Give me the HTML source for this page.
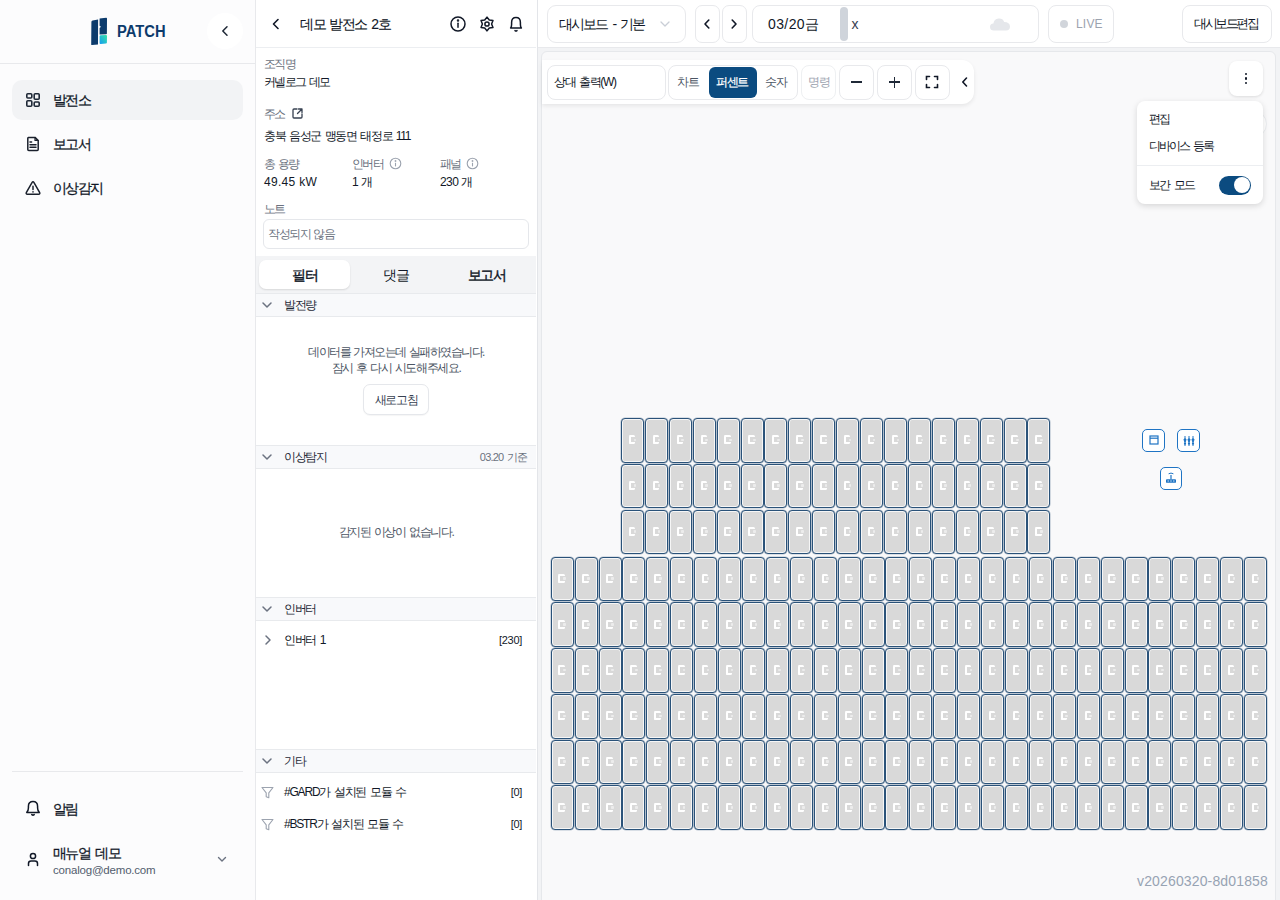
<!DOCTYPE html>
<html><head><meta charset="utf-8">
<style>
*{box-sizing:border-box;margin:0;padding:0}
html,body{width:1280px;height:900px;overflow:hidden;background:#fff;font-family:"Liberation Sans",sans-serif;color:#111827}
.a{position:absolute}
.t{position:absolute;white-space:nowrap;line-height:16px}
svg{display:block}
#side{left:0;top:0;width:256px;height:900px;background:#fcfcfd;border-right:1px solid #e8e9ec}
#panel{left:256px;top:0;width:282px;height:900px;background:#fff;border-right:1.5px solid #e3e5e9}
#main{left:538px;top:0;width:742px;height:900px;background:#fff}
.c{position:absolute;width:23px;height:44.6px;border:1.5px solid #2a5279;border-radius:4px;background:#d9d9d9;box-shadow:inset 0 0 0 1px #f6f6f6,0 0 0 .6px rgba(60,95,130,.35)}
.c::after{content:"";box-sizing:border-box;position:absolute;left:6.8px;top:16.2px;width:6.5px;height:9.2px;border:2px solid #fff;border-right-width:0;border-radius:1.5px}
.c::before{content:"";position:absolute;left:11.6px;top:19.6px;width:2.6px;height:2.6px;background:#ececec;border-radius:1px}
</style></head><body>

<!-- SIDEBAR -->
<div id="side" class="a">
  <!-- logo -->
  <svg class="a" style="left:90px;top:16px" width="20" height="31" viewBox="0 0 20 31">
    <defs><linearGradient id="lg" x1="1" y1="0" x2="0" y2="1"><stop offset="0" stop-color="#34e3a6"/><stop offset="1" stop-color="#159cf2"/></linearGradient></defs>
    <path d="M2.6 4.6 Q1.4 4.8 1.4 6 L1.2 28.4 Q1.2 29.2 2 29.1 L8 28.5 L8.1 3.4 Z" fill="#0c3b6c"/>
    <path d="M9.6 2.4 L16.2 1.8 Q17 1.8 17 2.6 L16.9 17.4 Q16.9 18.1 16.2 18.2 L9.6 18.5 L9.6 12 L11 10.8 L9.6 9.8 Z" fill="#0c3b6c"/>
    <path d="M10.6 19.3 L16 18.9 Q17 18.9 17 19.9 L16.9 26.6 Q16.9 27.4 16 27.5 L10.6 27.9 Q9.6 28 9.6 27 L9.6 20.3 Q9.6 19.4 10.6 19.3 Z" fill="url(#lg)"/>
  </svg>
  <div class="t" style="left:116.8px;top:24.3px;font-size:16px;line-height:16px;font-weight:bold;color:#0c3b6c;transform:scaleX(.92);transform-origin:left">PATCH</div>
  <!-- collapse -->
  <div class="a" style="left:207px;top:13px;width:36px;height:36px;border-radius:50%;background:#fff"></div>
  <svg class="a" style="left:219px;top:25px" width="12" height="12" viewBox="0 0 12 12"><path d="M8 1.8 L3.8 6 L8 10.2" fill="none" stroke="#1f2937" stroke-width="1.5" stroke-linecap="round" stroke-linejoin="round"/></svg>
  <div class="a" style="left:0;top:63px;width:255px;height:1px;background:#e8e9ec"></div>

  <!-- nav -->
  <div class="a" style="left:12px;top:80px;width:231px;height:40px;border-radius:10px;background:#f2f3f5"></div>
  <svg class="a" style="left:25px;top:92px" width="16" height="16" viewBox="0 0 16 16" fill="none" stroke="#1f2937" stroke-width="1.6">
    <rect x="1.8" y="1.8" width="5" height="4.2" rx="1"/><rect x="1.8" y="8.8" width="5" height="5.4" rx="1"/>
    <rect x="9.2" y="1.8" width="5" height="5.4" rx="1"/><rect x="9.2" y="10" width="5" height="4.2" rx="1"/>
  </svg>
  <div class="t" style="left:53px;top:92px;font-size:14px;-webkit-text-stroke:.25px #111827;letter-spacing:-1.6px">발전소</div>

  <svg class="a" style="left:25px;top:136px" width="16" height="16" viewBox="0 0 16 16" fill="none" stroke="#1a202c" stroke-width="1.5" stroke-linejoin="round" stroke-linecap="round">
    <path d="M3.4 1.4 H10 L13.2 4.6 V13.6 Q13.2 14.6 12.2 14.6 H3.8 Q2.8 14.6 2.8 13.6 V2.2 Q2.8 1.4 3.4 1.4 Z"/><path d="M10 1.6 V4.4 H13" stroke-width="1.2"/><path d="M5 6 H6.6 M5 8.8 H11 M5 11.3 H11"/>
  </svg>
  <div class="t" style="left:53px;top:136px;font-size:14px;-webkit-text-stroke:.25px #111827;letter-spacing:-1.6px">보고서</div>

  <svg class="a" style="left:25px;top:180px" width="16" height="16" viewBox="0 0 16 16" fill="none" stroke="#1a202c" stroke-width="1.5" stroke-linejoin="round" stroke-linecap="round">
    <path d="M7 2.6 Q8 1 9 2.6 L14.6 12.4 Q15.4 14.2 13.6 14.2 H2.4 Q0.6 14.2 1.4 12.4 Z"/><path d="M8 6.2 V9.4 M8 11.8 V11.9"/>
  </svg>
  <div class="t" style="left:53px;top:180px;font-size:14px;-webkit-text-stroke:.25px #111827;letter-spacing:-1.6px">이상감지</div>

  <div class="a" style="left:12px;top:771px;width:231px;height:1px;background:#e8e9ec"></div>
  <svg class="a" style="left:25px;top:800px" width="16" height="17" viewBox="0 0 16 17" fill="none" stroke="#111827" stroke-width="1.5" stroke-linejoin="round">
    <path d="M1.8 12.4 Q3.4 11 3.4 8 V6.4 Q3.4 1.6 8 1.6 Q12.6 1.6 12.6 6.4 V8 Q12.6 11 14.2 12.4 Z"/><path d="M6.8 14.6 Q8 15.6 9.2 14.6" stroke-linecap="round"/>
  </svg>
  <div class="t" style="left:53px;top:801px;font-size:14px;-webkit-text-stroke:.25px #111827;letter-spacing:-1.6px">알림</div>

  <svg class="a" style="left:25px;top:851px" width="16" height="16" viewBox="0 0 16 16" fill="none" stroke="#111827" stroke-width="1.5" stroke-linecap="round">
    <circle cx="8" cy="5" r="2.6"/><path d="M3.5 14.5 V12.5 Q3.5 10 6 10 H10 Q12.5 10 12.5 12.5 V14.5"/>
  </svg>
  <div class="t" style="left:53px;top:845px;font-size:14px;-webkit-text-stroke:.25px #111827;letter-spacing:-1.6px;word-spacing:3px">매뉴얼 데모</div>
  <div class="t" style="left:53px;top:862px;font-size:11.5px;color:#525d6e;letter-spacing:-.2px">conalog@demo.com</div>
  <svg class="a" style="left:216px;top:853px" width="12" height="12" viewBox="0 0 12 12"><path d="M2.5 4.5 L6 8 L9.5 4.5" fill="none" stroke="#6b7280" stroke-width="1.4" stroke-linecap="round" stroke-linejoin="round"/></svg>
</div>

<!-- PANEL -->
<div id="panel" class="a">
  <svg class="a" style="left:14px;top:18px" width="12" height="12" viewBox="0 0 12 12"><path d="M8 1.5 L3.5 6 L8 10.5" fill="none" stroke="#111827" stroke-width="1.6" stroke-linecap="round" stroke-linejoin="round"/></svg>
  <div class="t" style="left:44px;top:16px;font-size:14px;-webkit-text-stroke:.1px #111827;letter-spacing:-1.5px;word-spacing:2px">데모 발전소 2호</div>
  <svg class="a" style="left:193px;top:15px" width="18" height="18" viewBox="0 0 18 18" fill="none" stroke="#111827" stroke-width="1.5" stroke-linecap="round"><circle cx="9" cy="9" r="7"/><path d="M9 8.2 V12.2"/><circle cx="9" cy="5.6" r=".5" fill="#111827"/></svg>
  <svg class="a" style="left:221.5px;top:15px" width="18" height="18" viewBox="0 0 18 18" fill="none" stroke="#111827" stroke-width="1.5" stroke-linejoin="round"><path d="M9.00 2.10 L11.30 5.02 L14.98 5.55 L13.60 9.00 L14.98 12.45 L11.30 12.98 L9.00 15.90 L6.70 12.98 L3.02 12.45 L4.40 9.00 L3.02 5.55 L6.70 5.02 Z"/><circle cx="9" cy="9" r="2.1"/></svg>
  <svg class="a" style="left:251px;top:15px" width="18" height="18" viewBox="0 0 18 18" fill="none" stroke="#111827" stroke-width="1.5" stroke-linejoin="round"><path d="M3.6 13 Q4.6 12 4.6 9.5 V7.5 Q4.6 2.6 9 2.6 Q13.4 2.6 13.4 7.5 V9.5 Q13.4 12 14.4 13 Z"/><path d="M8 15.6 Q9 16.3 10 15.6" stroke-linecap="round"/></svg>
  <div class="a" style="left:0;top:47px;width:280px;height:1px;background:#eceef1"></div>

  <div class="t" style="left:8px;top:56px;font-size:12px;color:#6b7280;letter-spacing:-1.6px">조직명</div>
  <div class="t" style="left:8px;top:74px;font-size:12px;color:#111827;letter-spacing:-1.6px;word-spacing:1.5px">커넬로그 데모</div>
  <div class="t" style="left:8px;top:106px;font-size:12px;color:#6b7280;letter-spacing:-1.6px">주소</div>
  <svg class="a" style="left:35px;top:107px" width="13" height="13" viewBox="0 0 13 13" fill="none" stroke="#374151" stroke-width="1.3" stroke-linecap="round" stroke-linejoin="round"><path d="M6 2 H3 Q2 2 2 3 V10 Q2 11 3 11 H10 Q11 11 11 10 V7"/><path d="M7.5 2 H11 V5.5 M11 2 L6.5 6.5"/></svg>
  <div class="t" style="left:8px;top:128px;font-size:12px;color:#111827;letter-spacing:-1.3px;word-spacing:1.5px">충북 음성군 맹동면 태정로 111</div>

  <div class="t" style="left:8px;top:156px;font-size:12px;color:#6b7280;letter-spacing:-1.6px;word-spacing:1.5px">총 용량</div>
  <div class="t" style="left:8px;top:174px;font-size:12px;color:#111827;letter-spacing:.3px">49.45 kW</div>
  <div class="t" style="left:96px;top:156px;font-size:12px;color:#6b7280;letter-spacing:-1.6px">인버터</div>
  <svg class="a" style="left:133px;top:157px" width="13" height="13" viewBox="0 0 13 13" fill="none" stroke="#9ca3af" stroke-width="1.1"><circle cx="6.5" cy="6.5" r="5.3"/><path d="M6.5 5.8 V9.4"/><circle cx="6.5" cy="4" r=".35" fill="#9ca3af"/></svg>
  <div class="t" style="left:96px;top:174px;font-size:12px;color:#111827;letter-spacing:-.6px">1 개</div>
  <div class="t" style="left:184px;top:156px;font-size:12px;color:#6b7280;letter-spacing:-1.6px">패널</div>
  <svg class="a" style="left:210px;top:157px" width="13" height="13" viewBox="0 0 13 13" fill="none" stroke="#9ca3af" stroke-width="1.1"><circle cx="6.5" cy="6.5" r="5.3"/><path d="M6.5 5.8 V9.4"/><circle cx="6.5" cy="4" r=".35" fill="#9ca3af"/></svg>
  <div class="t" style="left:184px;top:174px;font-size:12px;color:#111827;letter-spacing:-.6px">230 개</div>

  <div class="t" style="left:8px;top:201px;font-size:12px;color:#6b7280;letter-spacing:-1.6px">노트</div>
  <div class="a" style="left:7px;top:219px;width:266px;height:30px;border:1px solid #e5e7eb;border-radius:6px"></div>
  <div class="t" style="left:12px;top:226px;font-size:12px;color:#6b7280;letter-spacing:-1.5px;word-spacing:1.5px">작성되지 않음</div>

  <!-- tabs -->
  <div class="a" style="left:0;top:256px;width:280px;height:38px;background:#f3f4f6;border-bottom:1px solid #e8eaed"></div>
  <div class="a" style="left:3px;top:260px;width:91px;height:29px;background:#fff;border-radius:7px;box-shadow:0 1px 2px rgba(0,0,0,.12)"></div>
  <div class="t" style="left:3px;top:267px;width:91px;text-align:center;font-size:14px;-webkit-text-stroke:.4px #111827;letter-spacing:-1.5px">필터</div>
  <div class="t" style="left:94px;top:267px;width:91px;text-align:center;font-size:14px;letter-spacing:-1.5px">댓글</div>
  <div class="t" style="left:185px;top:267px;width:91px;text-align:center;font-size:14px;-webkit-text-stroke:.4px #111827;letter-spacing:-1.5px">보고서</div>
  <div class="a" style="left:0;top:293px;width:280px;height:24px;background:#f8f9fb;border-top:1px solid #e8eaed;border-bottom:1px solid #e8eaed"></div>
  <svg class="a" style="left:5px;top:299px" width="12" height="12" viewBox="0 0 12 12"><path d="M2 4 L6 8 L10 4" fill="none" stroke="#6b7280" stroke-width="1.5" stroke-linecap="round" stroke-linejoin="round"/></svg>
  <div class="t" style="left:28px;top:297px;font-size:12px;color:#1f2937;letter-spacing:-1.5px">발전량</div>
  <div class="t" style="left:0;top:344px;width:280px;text-align:center;font-size:12px;color:#4b5563;letter-spacing:-1.55px;word-spacing:1.5px">데이터를 가져오는데 실패하였습니다.</div>
  <div class="t" style="left:0;top:360px;width:280px;text-align:center;font-size:12px;color:#4b5563;letter-spacing:-1.4px;word-spacing:1.5px">잠시 후 다시 시도해주세요.</div>
  <div class="a" style="left:107px;top:384px;width:66px;height:31px;border:1px solid #e5e7eb;border-radius:7px;background:#fff;box-shadow:0 1px 1px rgba(0,0,0,.04)"></div>
  <div class="t" style="left:107px;top:392px;width:66px;text-align:center;font-size:12px;color:#374151;letter-spacing:-1.4px">새로고침</div>
  <div class="a" style="left:0;top:445px;width:280px;height:24px;background:#f8f9fb;border-top:1px solid #e8eaed;border-bottom:1px solid #e8eaed"></div>
  <svg class="a" style="left:5px;top:451px" width="12" height="12" viewBox="0 0 12 12"><path d="M2 4 L6 8 L10 4" fill="none" stroke="#6b7280" stroke-width="1.5" stroke-linecap="round" stroke-linejoin="round"/></svg>
  <div class="t" style="left:28px;top:449px;font-size:12px;color:#1f2937;letter-spacing:-1.5px">이상탐지</div>
  <div class="t" style="right:10px;top:449px;font-size:11px;color:#6b7280;letter-spacing:-.8px;word-spacing:1px">03.20 기준</div>
  <div class="t" style="left:0;top:524px;width:280px;text-align:center;font-size:12px;color:#4b5563;letter-spacing:-1.4px;word-spacing:1.5px">감지된 이상이 없습니다.</div>
  <div class="a" style="left:0;top:597px;width:280px;height:24px;background:#f8f9fb;border-top:1px solid #e8eaed;border-bottom:1px solid #e8eaed"></div>
  <svg class="a" style="left:5px;top:603px" width="12" height="12" viewBox="0 0 12 12"><path d="M2 4 L6 8 L10 4" fill="none" stroke="#6b7280" stroke-width="1.5" stroke-linecap="round" stroke-linejoin="round"/></svg>
  <div class="t" style="left:28px;top:601px;font-size:12px;color:#1f2937;letter-spacing:-1.5px">인버터</div>
  <svg class="a" style="left:6px;top:634px" width="12" height="12" viewBox="0 0 12 12"><path d="M4 2 L8 6 L4 10" fill="none" stroke="#6b7280" stroke-width="1.5" stroke-linecap="round" stroke-linejoin="round"/></svg>
  <div class="t" style="left:28px;top:632px;font-size:12px;color:#111827;letter-spacing:-1.3px;word-spacing:1.5px">인버터 1</div>
  <div class="t" style="right:15px;top:632px;font-size:11px;color:#111827;letter-spacing:-.3px">[230]</div>
  <div class="a" style="left:0;top:749px;width:280px;height:24px;background:#f8f9fb;border-top:1px solid #e8eaed;border-bottom:1px solid #e8eaed"></div>
  <svg class="a" style="left:5px;top:755px" width="12" height="12" viewBox="0 0 12 12"><path d="M2 4 L6 8 L10 4" fill="none" stroke="#6b7280" stroke-width="1.5" stroke-linecap="round" stroke-linejoin="round"/></svg>
  <div class="t" style="left:28px;top:753px;font-size:12px;color:#1f2937;letter-spacing:-1.5px">기타</div>
  <svg class="a" style="left:5px;top:786px" width="13" height="13" viewBox="0 0 13 13" fill="none" stroke="#9ca3af" stroke-width="1.1" stroke-linejoin="round"><path d="M1 1.5 H12 L7.8 6.8 V11.8 L5.2 10.8 V6.8 Z"/></svg>
  <div class="t" style="left:28px;top:784px;font-size:12px;color:#111827;letter-spacing:-1.2px;word-spacing:1.5px">#GARD가 설치된 모듈 수</div>
  <div class="t" style="right:15px;top:784px;font-size:11px;color:#111827;letter-spacing:-.3px">[0]</div>
  <svg class="a" style="left:5px;top:818px" width="13" height="13" viewBox="0 0 13 13" fill="none" stroke="#9ca3af" stroke-width="1.1" stroke-linejoin="round"><path d="M1 1.5 H12 L7.8 6.8 V11.8 L5.2 10.8 V6.8 Z"/></svg>
  <div class="t" style="left:28px;top:816px;font-size:12px;color:#111827;letter-spacing:-1.2px;word-spacing:1.5px">#BSTR가 설치된 모듈 수</div>
  <div class="t" style="right:15px;top:816px;font-size:11px;color:#111827;letter-spacing:-.3px">[0]</div>
</div>

<!-- MAIN -->
<div id="main" class="a">
  <div class="a" style="left:8.5px;top:4.5px;width:139.5px;height:38px;border:1px solid #e8e9ec;border-radius:9px"></div>
  <div class="t" style="left:21px;top:16px;font-size:14px;color:#111827;letter-spacing:-1.9px;word-spacing:3px">대시보드 - 기본</div>
  <svg class="a" style="left:121px;top:18px" width="12" height="12" viewBox="0 0 12 12"><path d="M2 4 L6 8 L10 4" fill="none" stroke="#c9ced6" stroke-width="1.3" stroke-linecap="round" stroke-linejoin="round"/></svg>
  <div class="a" style="left:156.5px;top:4.5px;width:25px;height:38px;border:1px solid #e8e9ec;border-radius:7px"></div>
  <svg class="a" style="left:163px;top:18px" width="12" height="12" viewBox="0 0 12 12"><path d="M7.8 2 L4 6 L7.8 10" fill="none" stroke="#111827" stroke-width="1.6" stroke-linecap="round" stroke-linejoin="round"/></svg>
  <div class="a" style="left:184px;top:4.5px;width:24.5px;height:38px;border:1px solid #e8e9ec;border-radius:7px"></div>
  <svg class="a" style="left:190px;top:18px" width="12" height="12" viewBox="0 0 12 12"><path d="M4.2 2 L8 6 L4.2 10" fill="none" stroke="#111827" stroke-width="1.6" stroke-linecap="round" stroke-linejoin="round"/></svg>
  <div class="a" style="left:213.5px;top:4.5px;width:287px;height:38px;border:1px solid #e8e9ec;border-radius:8px"></div>
  <div class="t" style="left:230px;top:16px;font-size:14px;color:#111827;letter-spacing:.4px">03/20금</div>
  <div class="a" style="left:302px;top:7px;width:8px;height:33.5px;border-radius:4px;background:#cfd4db"></div>
  <div class="t" style="left:313.5px;top:15.5px;font-size:14px;color:#374151">x</div>
  <svg class="a" style="left:451px;top:16px" width="22" height="15" viewBox="0 0 22 15"><path d="M5 14.5 Q1 14.5 1 11 Q1 7.8 4.4 7.5 Q5 3.2 9.5 2.6 Q13.8 2.2 15.2 6 Q20.8 6 21 10.6 Q21 14.5 17 14.5 Z" fill="#e5e7eb"/></svg>
  <div class="a" style="left:509.5px;top:4.5px;width:66.5px;height:38px;border:1px solid #e8e9ec;border-radius:8px"></div>
  <div class="a" style="left:522px;top:20px;width:8px;height:8px;border-radius:50%;background:#d1d5db"></div>
  <div class="t" style="left:538px;top:16px;font-size:12px;color:#9ca3af;letter-spacing:.2px">LIVE</div>
  <div class="a" style="left:644px;top:4.5px;width:89.5px;height:38px;border:1px solid #e8e9ec;border-radius:8px"></div>
  <div class="t" style="left:656px;top:16px;font-size:13px;color:#111827;letter-spacing:-2.4px">대시보드편집</div>
  <div class="a" style="left:0;top:47px;width:742px;height:1px;background:#e8e9ec"></div>
  <div class="a" style="left:0;top:48px;width:742px;height:852px;background:#f2f3f5"></div>
  <div class="a" style="left:3px;top:51px;width:735px;height:870px;background:#f9f9fa;border:1px solid #e6e8eb;border-radius:6px"></div>
  <div class="a" style="left:4px;top:60px;width:432px;height:44px;background:#fff;border-radius:0 12px 12px 0;box-shadow:0 2px 4px rgba(0,0,0,.08)"></div>
  <div class="a" style="left:8.5px;top:64.5px;width:119px;height:35px;border:1px solid #e8e9ec;border-radius:8px"></div>
  <div class="t" style="left:16px;top:74px;font-size:12px;color:#111827;letter-spacing:-1.3px;word-spacing:1.5px">상대 출력(W)</div>
  <div class="a" style="left:130px;top:64.5px;width:130px;height:35px;border:1px solid #e8e9ec;border-radius:8px"></div>
  <div class="t" style="left:139px;top:74px;font-size:12px;color:#4b5563;letter-spacing:-1.3px">차트</div>
  <div class="a" style="left:171px;top:67px;width:47.5px;height:30.5px;border-radius:6px;background:#0b4b80"></div>
  <div class="t" style="left:178px;top:74px;font-size:12px;color:#fff;-webkit-text-stroke:.2px #fff;letter-spacing:-1.5px">퍼센트</div>
  <div class="t" style="left:227px;top:74px;font-size:12px;color:#4b5563;letter-spacing:-1.3px">숫자</div>
  <div class="a" style="left:263px;top:64.5px;width:35px;height:35px;border:1px solid #eef0f2;border-radius:8px"></div>
  <div class="t" style="left:270px;top:74px;font-size:12px;color:#9ca3af;letter-spacing:-1.3px">명령</div>
  <div class="a" style="left:300.5px;top:64.5px;width:35px;height:35px;border:1px solid #e8e9ec;border-radius:8px"></div>
  <div class="a" style="left:313px;top:81.2px;width:10.5px;height:1.6px;background:#1f2937"></div>
  <div class="a" style="left:338.5px;top:64.5px;width:35.5px;height:35px;border:1px solid #e8e9ec;border-radius:8px"></div>
  <div class="a" style="left:350.8px;top:81.2px;width:11px;height:1.6px;background:#1f2937"></div>
  <div class="a" style="left:355.5px;top:76.5px;width:1.6px;height:11px;background:#1f2937"></div>
  <div class="a" style="left:376.5px;top:64.5px;width:35px;height:35px;border:1px solid #e8e9ec;border-radius:8px"></div>
  <svg class="a" style="left:387px;top:75px" width="14" height="14" viewBox="0 0 14 14" fill="none" stroke="#111827" stroke-width="1.6" stroke-linecap="round"><path d="M1.5 4.5 V1.5 H4.5 M9.5 1.5 H12.5 V4.5 M12.5 9.5 V12.5 H9.5 M4.5 12.5 H1.5 V9.5"/></svg>
  <svg class="a" style="left:421px;top:76px" width="12" height="12" viewBox="0 0 12 12"><path d="M7.5 2 L3.8 6 L7.5 10" fill="none" stroke="#111827" stroke-width="1.6" stroke-linecap="round" stroke-linejoin="round"/></svg>
  <div class="a" style="left:690.5px;top:61px;width:34.5px;height:34.5px;background:#fff;border-radius:8px;box-shadow:0 1px 3px rgba(0,0,0,.12)"></div>
  <div class="a" style="left:706.6px;top:72.5px;width:2.6px;height:2.6px;border-radius:50%;background:#111827"></div>
  <div class="a" style="left:706.6px;top:77px;width:2.6px;height:2.6px;border-radius:50%;background:#111827"></div>
  <div class="a" style="left:706.6px;top:81.5px;width:2.6px;height:2.6px;border-radius:50%;background:#111827"></div>
  <div class="c" style="left:83.00px;top:418.00px"></div><div class="c" style="left:106.91px;top:418.00px"></div><div class="c" style="left:130.82px;top:418.00px"></div><div class="c" style="left:154.73px;top:418.00px"></div><div class="c" style="left:178.64px;top:418.00px"></div><div class="c" style="left:202.55px;top:418.00px"></div><div class="c" style="left:226.46px;top:418.00px"></div><div class="c" style="left:250.37px;top:418.00px"></div><div class="c" style="left:274.28px;top:418.00px"></div><div class="c" style="left:298.19px;top:418.00px"></div><div class="c" style="left:322.10px;top:418.00px"></div><div class="c" style="left:346.01px;top:418.00px"></div><div class="c" style="left:369.92px;top:418.00px"></div><div class="c" style="left:393.83px;top:418.00px"></div><div class="c" style="left:417.74px;top:418.00px"></div><div class="c" style="left:441.65px;top:418.00px"></div><div class="c" style="left:465.56px;top:418.00px"></div><div class="c" style="left:489.47px;top:418.00px"></div><div class="c" style="left:83.00px;top:463.75px"></div><div class="c" style="left:106.91px;top:463.75px"></div><div class="c" style="left:130.82px;top:463.75px"></div><div class="c" style="left:154.73px;top:463.75px"></div><div class="c" style="left:178.64px;top:463.75px"></div><div class="c" style="left:202.55px;top:463.75px"></div><div class="c" style="left:226.46px;top:463.75px"></div><div class="c" style="left:250.37px;top:463.75px"></div><div class="c" style="left:274.28px;top:463.75px"></div><div class="c" style="left:298.19px;top:463.75px"></div><div class="c" style="left:322.10px;top:463.75px"></div><div class="c" style="left:346.01px;top:463.75px"></div><div class="c" style="left:369.92px;top:463.75px"></div><div class="c" style="left:393.83px;top:463.75px"></div><div class="c" style="left:417.74px;top:463.75px"></div><div class="c" style="left:441.65px;top:463.75px"></div><div class="c" style="left:465.56px;top:463.75px"></div><div class="c" style="left:489.47px;top:463.75px"></div><div class="c" style="left:83.00px;top:509.50px"></div><div class="c" style="left:106.91px;top:509.50px"></div><div class="c" style="left:130.82px;top:509.50px"></div><div class="c" style="left:154.73px;top:509.50px"></div><div class="c" style="left:178.64px;top:509.50px"></div><div class="c" style="left:202.55px;top:509.50px"></div><div class="c" style="left:226.46px;top:509.50px"></div><div class="c" style="left:250.37px;top:509.50px"></div><div class="c" style="left:274.28px;top:509.50px"></div><div class="c" style="left:298.19px;top:509.50px"></div><div class="c" style="left:322.10px;top:509.50px"></div><div class="c" style="left:346.01px;top:509.50px"></div><div class="c" style="left:369.92px;top:509.50px"></div><div class="c" style="left:393.83px;top:509.50px"></div><div class="c" style="left:417.74px;top:509.50px"></div><div class="c" style="left:441.65px;top:509.50px"></div><div class="c" style="left:465.56px;top:509.50px"></div><div class="c" style="left:489.47px;top:509.50px"></div><div class="c" style="left:12.70px;top:556.70px"></div><div class="c" style="left:36.61px;top:556.70px"></div><div class="c" style="left:60.52px;top:556.70px"></div><div class="c" style="left:84.43px;top:556.70px"></div><div class="c" style="left:108.34px;top:556.70px"></div><div class="c" style="left:132.25px;top:556.70px"></div><div class="c" style="left:156.16px;top:556.70px"></div><div class="c" style="left:180.07px;top:556.70px"></div><div class="c" style="left:203.98px;top:556.70px"></div><div class="c" style="left:227.89px;top:556.70px"></div><div class="c" style="left:251.80px;top:556.70px"></div><div class="c" style="left:275.71px;top:556.70px"></div><div class="c" style="left:299.62px;top:556.70px"></div><div class="c" style="left:323.53px;top:556.70px"></div><div class="c" style="left:347.44px;top:556.70px"></div><div class="c" style="left:371.35px;top:556.70px"></div><div class="c" style="left:395.26px;top:556.70px"></div><div class="c" style="left:419.17px;top:556.70px"></div><div class="c" style="left:443.08px;top:556.70px"></div><div class="c" style="left:466.99px;top:556.70px"></div><div class="c" style="left:490.90px;top:556.70px"></div><div class="c" style="left:514.81px;top:556.70px"></div><div class="c" style="left:538.72px;top:556.70px"></div><div class="c" style="left:562.63px;top:556.70px"></div><div class="c" style="left:586.54px;top:556.70px"></div><div class="c" style="left:610.45px;top:556.70px"></div><div class="c" style="left:634.36px;top:556.70px"></div><div class="c" style="left:658.27px;top:556.70px"></div><div class="c" style="left:682.18px;top:556.70px"></div><div class="c" style="left:706.09px;top:556.70px"></div><div class="c" style="left:12.70px;top:602.45px"></div><div class="c" style="left:36.61px;top:602.45px"></div><div class="c" style="left:60.52px;top:602.45px"></div><div class="c" style="left:84.43px;top:602.45px"></div><div class="c" style="left:108.34px;top:602.45px"></div><div class="c" style="left:132.25px;top:602.45px"></div><div class="c" style="left:156.16px;top:602.45px"></div><div class="c" style="left:180.07px;top:602.45px"></div><div class="c" style="left:203.98px;top:602.45px"></div><div class="c" style="left:227.89px;top:602.45px"></div><div class="c" style="left:251.80px;top:602.45px"></div><div class="c" style="left:275.71px;top:602.45px"></div><div class="c" style="left:299.62px;top:602.45px"></div><div class="c" style="left:323.53px;top:602.45px"></div><div class="c" style="left:347.44px;top:602.45px"></div><div class="c" style="left:371.35px;top:602.45px"></div><div class="c" style="left:395.26px;top:602.45px"></div><div class="c" style="left:419.17px;top:602.45px"></div><div class="c" style="left:443.08px;top:602.45px"></div><div class="c" style="left:466.99px;top:602.45px"></div><div class="c" style="left:490.90px;top:602.45px"></div><div class="c" style="left:514.81px;top:602.45px"></div><div class="c" style="left:538.72px;top:602.45px"></div><div class="c" style="left:562.63px;top:602.45px"></div><div class="c" style="left:586.54px;top:602.45px"></div><div class="c" style="left:610.45px;top:602.45px"></div><div class="c" style="left:634.36px;top:602.45px"></div><div class="c" style="left:658.27px;top:602.45px"></div><div class="c" style="left:682.18px;top:602.45px"></div><div class="c" style="left:706.09px;top:602.45px"></div><div class="c" style="left:12.70px;top:648.20px"></div><div class="c" style="left:36.61px;top:648.20px"></div><div class="c" style="left:60.52px;top:648.20px"></div><div class="c" style="left:84.43px;top:648.20px"></div><div class="c" style="left:108.34px;top:648.20px"></div><div class="c" style="left:132.25px;top:648.20px"></div><div class="c" style="left:156.16px;top:648.20px"></div><div class="c" style="left:180.07px;top:648.20px"></div><div class="c" style="left:203.98px;top:648.20px"></div><div class="c" style="left:227.89px;top:648.20px"></div><div class="c" style="left:251.80px;top:648.20px"></div><div class="c" style="left:275.71px;top:648.20px"></div><div class="c" style="left:299.62px;top:648.20px"></div><div class="c" style="left:323.53px;top:648.20px"></div><div class="c" style="left:347.44px;top:648.20px"></div><div class="c" style="left:371.35px;top:648.20px"></div><div class="c" style="left:395.26px;top:648.20px"></div><div class="c" style="left:419.17px;top:648.20px"></div><div class="c" style="left:443.08px;top:648.20px"></div><div class="c" style="left:466.99px;top:648.20px"></div><div class="c" style="left:490.90px;top:648.20px"></div><div class="c" style="left:514.81px;top:648.20px"></div><div class="c" style="left:538.72px;top:648.20px"></div><div class="c" style="left:562.63px;top:648.20px"></div><div class="c" style="left:586.54px;top:648.20px"></div><div class="c" style="left:610.45px;top:648.20px"></div><div class="c" style="left:634.36px;top:648.20px"></div><div class="c" style="left:658.27px;top:648.20px"></div><div class="c" style="left:682.18px;top:648.20px"></div><div class="c" style="left:706.09px;top:648.20px"></div><div class="c" style="left:12.70px;top:693.95px"></div><div class="c" style="left:36.61px;top:693.95px"></div><div class="c" style="left:60.52px;top:693.95px"></div><div class="c" style="left:84.43px;top:693.95px"></div><div class="c" style="left:108.34px;top:693.95px"></div><div class="c" style="left:132.25px;top:693.95px"></div><div class="c" style="left:156.16px;top:693.95px"></div><div class="c" style="left:180.07px;top:693.95px"></div><div class="c" style="left:203.98px;top:693.95px"></div><div class="c" style="left:227.89px;top:693.95px"></div><div class="c" style="left:251.80px;top:693.95px"></div><div class="c" style="left:275.71px;top:693.95px"></div><div class="c" style="left:299.62px;top:693.95px"></div><div class="c" style="left:323.53px;top:693.95px"></div><div class="c" style="left:347.44px;top:693.95px"></div><div class="c" style="left:371.35px;top:693.95px"></div><div class="c" style="left:395.26px;top:693.95px"></div><div class="c" style="left:419.17px;top:693.95px"></div><div class="c" style="left:443.08px;top:693.95px"></div><div class="c" style="left:466.99px;top:693.95px"></div><div class="c" style="left:490.90px;top:693.95px"></div><div class="c" style="left:514.81px;top:693.95px"></div><div class="c" style="left:538.72px;top:693.95px"></div><div class="c" style="left:562.63px;top:693.95px"></div><div class="c" style="left:586.54px;top:693.95px"></div><div class="c" style="left:610.45px;top:693.95px"></div><div class="c" style="left:634.36px;top:693.95px"></div><div class="c" style="left:658.27px;top:693.95px"></div><div class="c" style="left:682.18px;top:693.95px"></div><div class="c" style="left:706.09px;top:693.95px"></div><div class="c" style="left:12.70px;top:739.70px"></div><div class="c" style="left:36.61px;top:739.70px"></div><div class="c" style="left:60.52px;top:739.70px"></div><div class="c" style="left:84.43px;top:739.70px"></div><div class="c" style="left:108.34px;top:739.70px"></div><div class="c" style="left:132.25px;top:739.70px"></div><div class="c" style="left:156.16px;top:739.70px"></div><div class="c" style="left:180.07px;top:739.70px"></div><div class="c" style="left:203.98px;top:739.70px"></div><div class="c" style="left:227.89px;top:739.70px"></div><div class="c" style="left:251.80px;top:739.70px"></div><div class="c" style="left:275.71px;top:739.70px"></div><div class="c" style="left:299.62px;top:739.70px"></div><div class="c" style="left:323.53px;top:739.70px"></div><div class="c" style="left:347.44px;top:739.70px"></div><div class="c" style="left:371.35px;top:739.70px"></div><div class="c" style="left:395.26px;top:739.70px"></div><div class="c" style="left:419.17px;top:739.70px"></div><div class="c" style="left:443.08px;top:739.70px"></div><div class="c" style="left:466.99px;top:739.70px"></div><div class="c" style="left:490.90px;top:739.70px"></div><div class="c" style="left:514.81px;top:739.70px"></div><div class="c" style="left:538.72px;top:739.70px"></div><div class="c" style="left:562.63px;top:739.70px"></div><div class="c" style="left:586.54px;top:739.70px"></div><div class="c" style="left:610.45px;top:739.70px"></div><div class="c" style="left:634.36px;top:739.70px"></div><div class="c" style="left:658.27px;top:739.70px"></div><div class="c" style="left:682.18px;top:739.70px"></div><div class="c" style="left:706.09px;top:739.70px"></div><div class="c" style="left:12.70px;top:785.45px"></div><div class="c" style="left:36.61px;top:785.45px"></div><div class="c" style="left:60.52px;top:785.45px"></div><div class="c" style="left:84.43px;top:785.45px"></div><div class="c" style="left:108.34px;top:785.45px"></div><div class="c" style="left:132.25px;top:785.45px"></div><div class="c" style="left:156.16px;top:785.45px"></div><div class="c" style="left:180.07px;top:785.45px"></div><div class="c" style="left:203.98px;top:785.45px"></div><div class="c" style="left:227.89px;top:785.45px"></div><div class="c" style="left:251.80px;top:785.45px"></div><div class="c" style="left:275.71px;top:785.45px"></div><div class="c" style="left:299.62px;top:785.45px"></div><div class="c" style="left:323.53px;top:785.45px"></div><div class="c" style="left:347.44px;top:785.45px"></div><div class="c" style="left:371.35px;top:785.45px"></div><div class="c" style="left:395.26px;top:785.45px"></div><div class="c" style="left:419.17px;top:785.45px"></div><div class="c" style="left:443.08px;top:785.45px"></div><div class="c" style="left:466.99px;top:785.45px"></div><div class="c" style="left:490.90px;top:785.45px"></div><div class="c" style="left:514.81px;top:785.45px"></div><div class="c" style="left:538.72px;top:785.45px"></div><div class="c" style="left:562.63px;top:785.45px"></div><div class="c" style="left:586.54px;top:785.45px"></div><div class="c" style="left:610.45px;top:785.45px"></div><div class="c" style="left:634.36px;top:785.45px"></div><div class="c" style="left:658.27px;top:785.45px"></div><div class="c" style="left:682.18px;top:785.45px"></div><div class="c" style="left:706.09px;top:785.45px"></div>
  <div class="a" style="left:604px;top:428.5px;width:23px;height:23px;border:1.5px solid #1f74c4;border-radius:5px;background:#fff"></div>
  <svg class="a" style="left:610.5px;top:435px" width="10" height="10" viewBox="0 0 10 10" fill="none" stroke="#1f74c4" stroke-width="1.2"><rect x="1" y="1" width="8" height="8"/><path d="M1 3.2 H9"/></svg>
  <div class="a" style="left:639px;top:429px;width:23px;height:23px;border:1.5px solid #1f74c4;border-radius:5px;background:#fff"></div>
  <svg class="a" style="left:644.5px;top:434.5px" width="12" height="12" viewBox="0 0 12 12" fill="none" stroke="#1f74c4" stroke-width="1"><path d="M2 1 V11 M6 1 V11 M10 1 V11"/><path d="M1 4 H3 L2.5 6.5 H1.5 Z M5 4 H7 L6.5 6.5 H5.5 Z M9 4 H11 L10.5 6.5 H9.5 Z" fill="#1f74c4"/><path d="M1.2 8 H2.8 L2 9.5 Z M5.2 8 H6.8 L6 9.5 Z M9.2 8 H10.8 L10 9.5 Z" fill="#1f74c4"/></svg>
  <div class="a" style="left:621.5px;top:467px;width:22.5px;height:22.5px;border:1.5px solid #1f74c4;border-radius:5px;background:#fff"></div>
  <svg class="a" style="left:626.5px;top:472px" width="12" height="12" viewBox="0 0 12 12" fill="none" stroke="#1f74c4" stroke-width="1"><path d="M3.6 1.8 Q6 0.4 8.4 1.8"/><path d="M6 3 V7.2" stroke-width="1.2"/><rect x="1" y="7.2" width="10" height="3.6" rx=".9" fill="#1f74c4" stroke="none"/><path d="M2.6 9 H3.8 M5.4 9 H6.6 M8.2 9 H9.4" stroke="#fff" stroke-width="1.2"/></svg>
  <div class="t" style="right:12px;top:873px;font-size:14px;color:#97a3b3;letter-spacing:.15px">v20260320-8d01858</div>
  <div class="a" style="left:701px;top:109.5px;width:28px;height:28px;border-radius:50%;background:#fff;border:1px solid #eceef1"></div>
  <div class="a" style="left:599px;top:100.5px;width:126px;height:103.5px;background:#fff;border-radius:8px;box-shadow:0 2px 6px rgba(0,0,0,.14)"></div>
  <div class="t" style="left:611px;top:111px;font-size:12px;color:#111827;letter-spacing:-1.6px">편집</div>
  <div class="t" style="left:611px;top:138px;font-size:12px;color:#111827;letter-spacing:-1.9px;word-spacing:2.5px">디바이스 등록</div>
  <div class="a" style="left:599px;top:165px;width:126px;height:1px;background:#eceef1"></div>
  <div class="t" style="left:611px;top:177px;font-size:12px;color:#111827;letter-spacing:-1.6px;word-spacing:2px">보간 모드</div>
  <div class="a" style="left:681px;top:175.5px;width:32px;height:19px;border-radius:10px;background:#0b4b80"></div>
  <div class="a" style="left:695.5px;top:177px;width:16px;height:16px;border-radius:50%;background:#fff"></div>
</div>

</body></html>
